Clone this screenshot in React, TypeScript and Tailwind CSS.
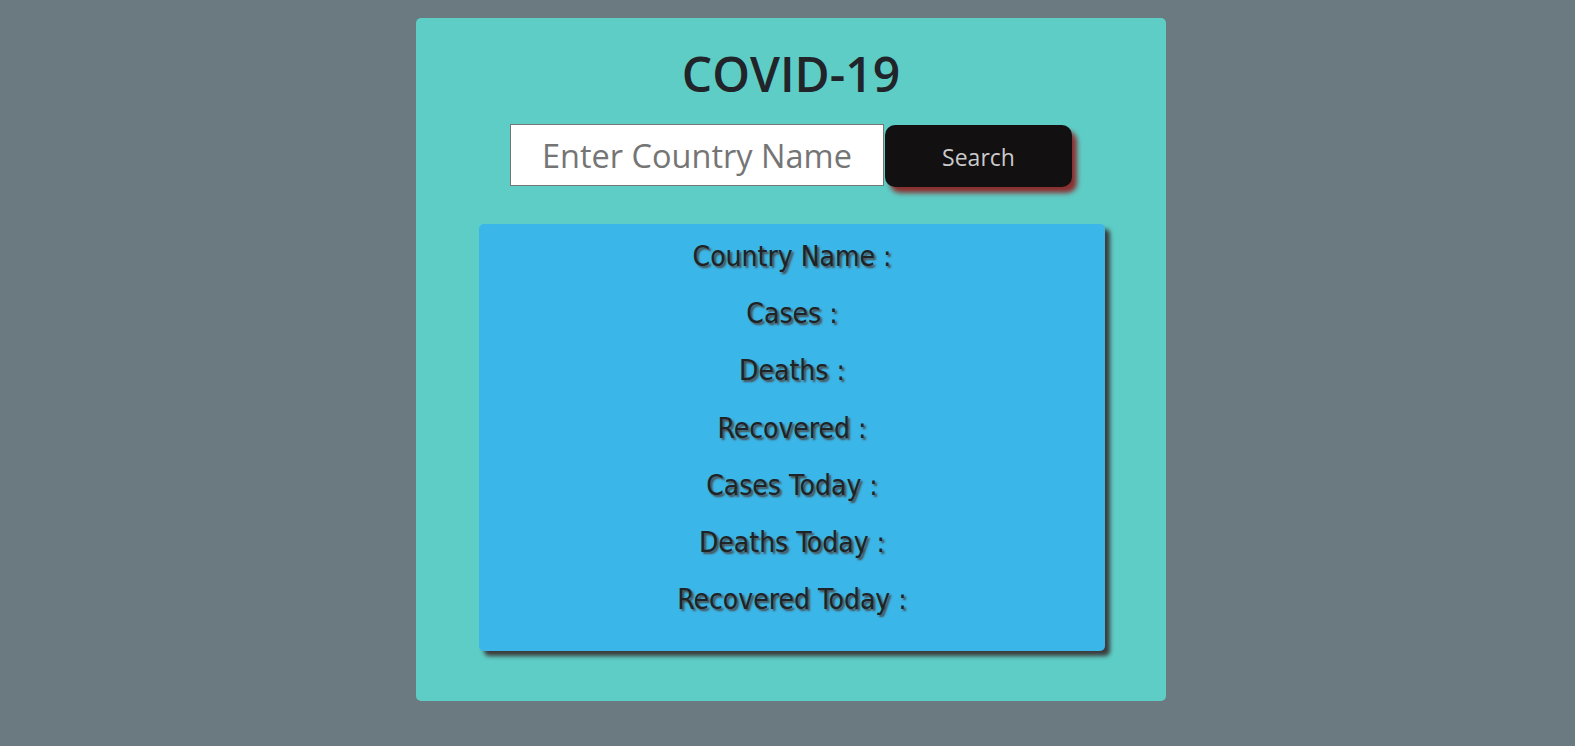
import React from "react";

const rows = [
  "Country Name :",
  "Cases :",
  "Deaths :",
  "Recovered :",
  "Cases Today :",
  "Deaths Today :",
  "Recovered Today :",
];

const sans = { fontFamily: "'Open Sans', 'Noto Sans', sans-serif" };

export default function App() {
  return (
    <div className="min-h-screen w-full bg-[#6b7a80] pt-[18px] pl-[7px] flex justify-center items-start">
      <div className="w-[750px] h-[683px] rounded-[5px] bg-[#5ecdc6] flex flex-col items-center">
        <h1
          className="mt-[31px] h-[50px] leading-[50px] text-[48px] font-semibold text-[#212529]"
          style={sans}
        >
          COVID-19
        </h1>
        <div className="mt-[25px] flex items-start">
          <input
            type="text"
            placeholder="Enter Country Name"
            className="w-[374px] h-[62px] bg-white border border-[#767676] text-center text-[32.5px] text-[#222] placeholder:text-[#757575] outline-none"
            style={sans}
          />
          <button
            className="ml-[1px] mt-[1px] w-[187px] h-[62px] rounded-[10px] bg-[#121011] text-[#cacaca] text-[23px] pt-[2px] shadow-[5px_6px_5px_#8b2f2f]"
            style={sans}
          >
            Search
          </button>
        </div>
        <div className="mt-[37px] self-start ml-[63px] w-[626px] h-[427px] rounded-[5px] bg-[#3bb6e8] shadow-[5px_5px_4px_#3c3c3c] pt-[4px] flex flex-col">
          {rows.map((r) => (
            <div
              key={r}
              className="h-[57.3px] flex items-center justify-center text-[28px] text-[#1f2326] [text-shadow:2px_2px_2px_#4a4a4a]"
              style={{ fontFamily: "'DejaVu Sans Condensed', 'DejaVu Sans', Verdana, sans-serif" }}
            >
              {r}
            </div>
          ))}
        </div>
      </div>
    </div>
  );
}
